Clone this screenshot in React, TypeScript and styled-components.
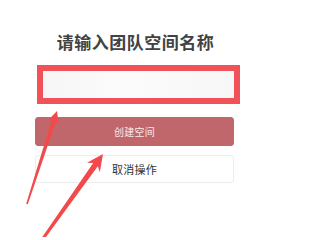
import styled, { createGlobalStyle } from "styled-components";

const GlobalStyle = createGlobalStyle`
  html, body {
    margin: 0;
    padding: 0;
    background: #ffffff;
  }
  body {
    font-family: "Noto Sans CJK SC", "Noto Sans", sans-serif;
  }
`;

const App = () => {
  return (
    <Page>
      <GlobalStyle />
      <Title>请输入团队空间名称</Title>
      <NameBox>
        <NameInput />
      </NameBox>
      <Button $primary>创建空间</Button>
      <Button>取消操作</Button>
      <Arrows viewBox="0 0 273 237" width="273" height="237">
        <polygon
          fill="#f24a4c"
          points="57,111 58.8,124.4 56,121.2 27.8,204.2 26.2,203.8 51.8,119.8 47.8,120.6"
        />
        <polygon
          fill="#f24a4c"
          points="103,154 99.8,172.2 97.8,166.2 43.2,240.8 40.8,239.2 93.2,163 87,162.8"
        />
      </Arrows>
    </Page>
  );
};
export default App;

const Page = styled.div`
  position: relative;
  width: 273px;
  height: 237px;
  overflow: hidden;
  display: flex;
  flex-direction: column;
  padding: 30px 0 0 35px;
  box-sizing: border-box;
`;

const Title = styled.div`
  width: 199px;
  text-align: center;
  color: #424242;
  font-size: 17px;
  font-weight: 700;
  line-height: 24px;
  letter-spacing: 0.5px;
  padding-left: 1px;
`;

const NameBox = styled.div`
  margin: 11px 0 0 2px;
  width: 203px;
  height: 39px;
  box-sizing: border-box;
  border: 6px solid #f1525a;
  background: #fafafa;
`;

const NameInput = styled.div`
  width: 100%;
  height: 100%;
  background: linear-gradient(90deg, #f6f6f6, #fbfbfb 40%, #f7f7f7);
`;

const Button = styled.div<{ $primary?: boolean }>`
  width: 199px;
  height: ${(p) => (p.$primary ? "29px" : "28px")};
  margin-top: ${(p) => (p.$primary ? "13px" : "9px")};
  box-sizing: border-box;
  border-radius: 3px;
  display: flex;
  align-items: center;
  justify-content: center;
  background: ${(p) => (p.$primary ? "#c0676b" : "#ffffff")};
  border: 1px solid ${(p) => (p.$primary ? "#c0676b" : "#ececec")};
  color: ${(p) => (p.$primary ? "#fbe9ea" : "#333333")};
  font-size: ${(p) => (p.$primary ? "10px" : "11px")};
  letter-spacing: 0.3px;
`;

const Arrows = styled.svg`
  position: absolute;
  left: 0;
  top: 0;
  pointer-events: none;
`;
